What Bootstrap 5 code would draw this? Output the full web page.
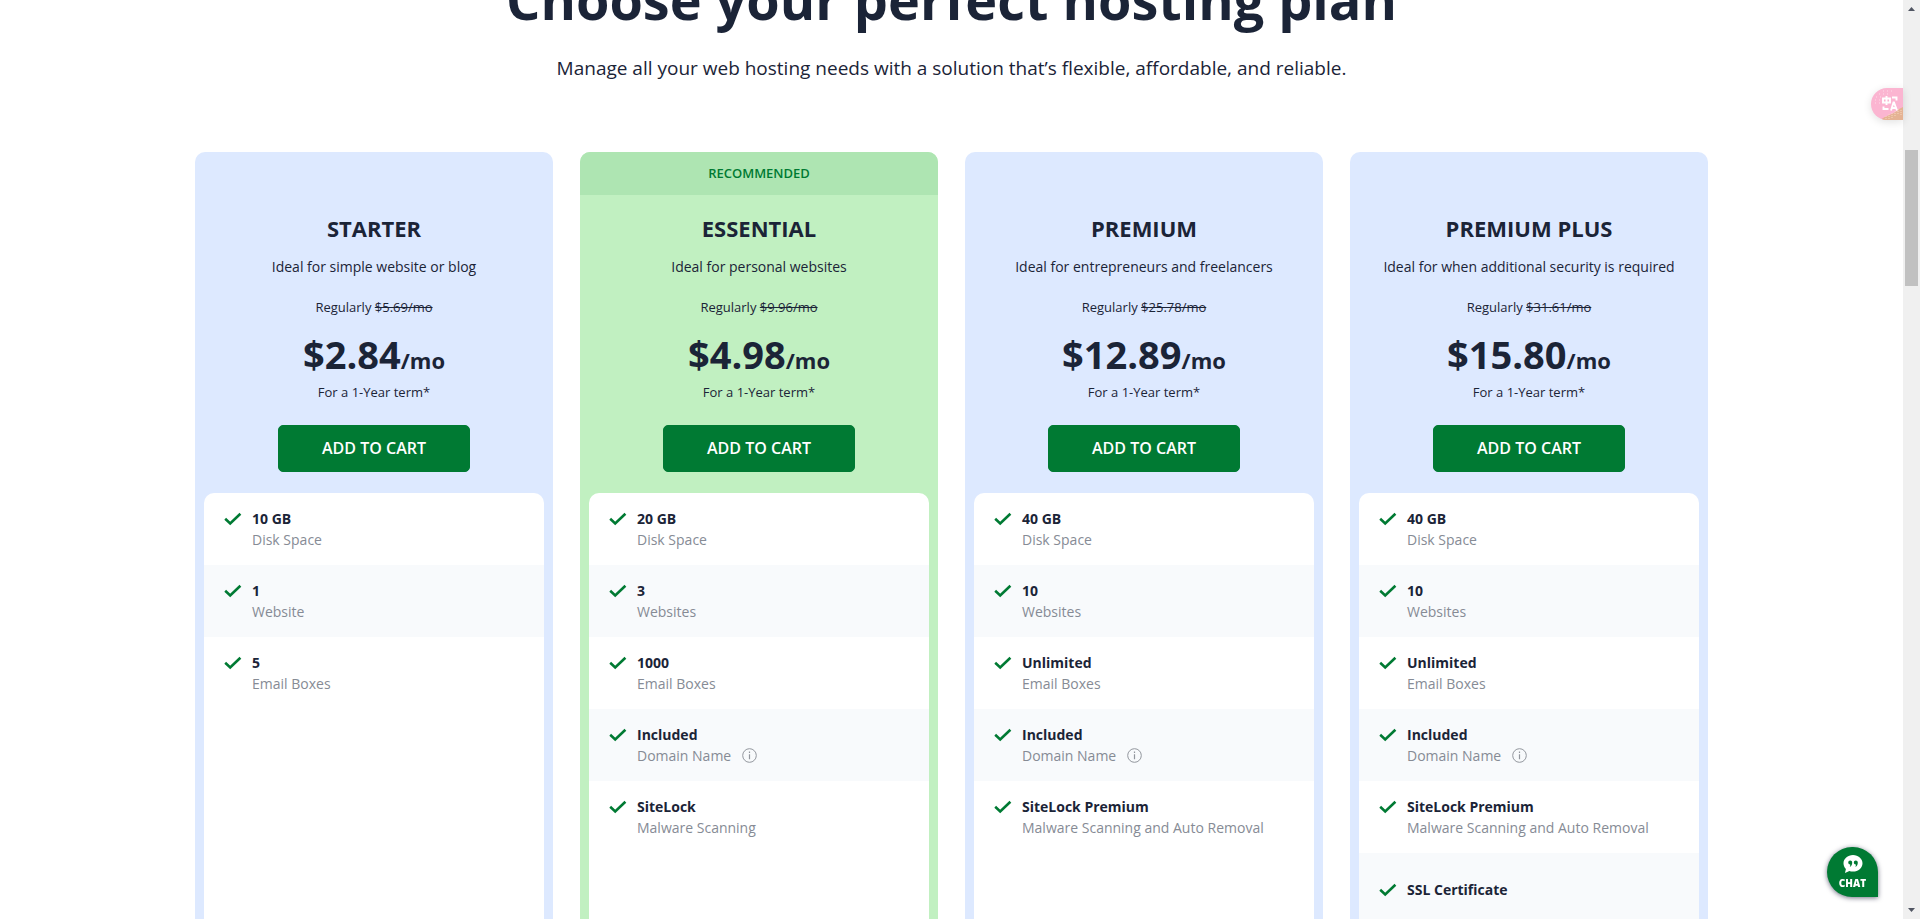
<!DOCTYPE html>
<html lang="en">
<head>
<meta charset="utf-8">
<meta name="viewport" content="width=device-width, initial-scale=1">
<title>Choose your perfect hosting plan</title>
<link href="https://cdn.jsdelivr.net/npm/bootstrap@5.3.0/dist/css/bootstrap.min.css" rel="stylesheet">
<style>
  :root { --ink: #1b2437; --muted-ink: #868b95; --brand: #007a33; }
  body { font-family: "Open Sans", "Noto Sans", sans-serif; color: var(--ink); background: #fff; }
  .page-view { min-width: 0; }
  .plans-section { margin-top: -41px; }
  .plans-title { font-size: 54px; line-height: 80px; font-weight: 700; }
  .plans-intro { font-size: 19px; line-height: 30px; margin-bottom: 69px; margin-top: 14px; }
  .plans-wrap { max-width: 1513px; }
  .plans-row { --bs-gutter-x: 27px; --bs-gutter-y: 0; }
  .plan { --plan-bg: #dde9ff; background: var(--plan-bg); border-radius: 10px 10px 0 0; min-height: 800px; }
  .plan-featured { --plan-bg: #c1f0c1; }
  .plan-flag { height: 43px; font-size: 13px; font-weight: 600; color: var(--brand); border-radius: 10px 10px 0 0; }
  .plan-featured .plan-flag { background: #aee5b2; }
  .plan-name { font-size: 22px; line-height: 30px; font-weight: 700; margin: 18px 0 14px; }
  .plan-desc { font-size: 14px; line-height: 20px; margin-bottom: 20px; }
  .plan-note { font-size: 13px; line-height: 20px; }
  .plan-price { font-size: 38px; line-height: 44px; font-weight: 700; margin-top: 15px; }
  .plan-per { font-size: 22px; }
  .btn-cart { --bs-btn-color: #fff; --bs-btn-bg: #007a33; --bs-btn-border-color: #007a33; --bs-btn-hover-color: #fff; --bs-btn-hover-bg: #00632a; --bs-btn-font-weight: 600; --bs-btn-border-radius: 5px; width: 192px; height: 47px; padding: 4px 12px 6px; margin: 23px 0 21px; }
  .feature-list { margin: 0 9px; background: #fff; border-radius: 10px 10px 0 0; font-size: 14px; line-height: 21px; }
  .feature { height: 72px; padding: 0 20px; column-gap: 10px; grid-template-columns: 18px 1fr; align-content: center; }
  .feature:nth-child(even) { background: #f8fafc; }
  .feature strong { display: block; font-weight: 700; }
  .feature span { color: var(--muted-ink); }
  .tick { width: 18px; height: 21px; }
  .info-btn { width: 15px; height: 15px; margin-left: 11px; color: #92969d; }
  .scroll-track { width: 17px; background: #f0f0f0; }
  .scroll-thumb { width: 13px; height: 136px; background: #c1c1c1; margin-top: 133px; }
  .scroll-track svg { width: 17px; height: 17px; fill: #505562; }
  .translate-tab { top: 88px; right: 17px; width: 32px; height: 32px; border-radius: 16px 0 0 16px; overflow: hidden; background: #fbb5d1; box-shadow: 0 2px 9px rgba(0,0,0,.12); }
  .chat-btn { right: 42px; bottom: 22px; width: 51px; height: 50px; border-radius: 26px 26px 0 26px; background: var(--brand); color: #fff; font-size: 10px; line-height: 12px; font-weight: 800; box-shadow: 0 1px 5px rgba(20,20,50,.6); }
</style>
</head>
<body class="vh-100 overflow-hidden d-flex">
<svg class="d-none" aria-hidden="true">
  <symbol id="tick" viewBox="0 0 18 21"><path d="M1.2 10.8 6.2 15.400 16.400 5.800" fill="none" stroke="#007a33" stroke-width="2.600"/></symbol>
  <symbol id="info" viewBox="0 0 15 15"><circle cx="7.500" cy="7.500" r="6.800" fill="none" stroke="currentColor"/><path d="M7.500 6.200v5M7.500 3.600v1.300" stroke="currentColor" stroke-width="1.200"/></symbol>
</svg>

<main class="page-view flex-grow-1 overflow-hidden">
  <section class="plans-section text-center">
    <h1 class="plans-title mb-0">Choose your perfect hosting plan</h1>
    <p class="plans-intro">Manage all your web hosting needs with a solution that’s flexible, affordable, and reliable.</p>
    <div class="plans-wrap mx-auto">
      <div class="plans-row row">

        <div class="col-12 col-sm-6 col-xl-3">
          <article class="plan h-100 d-flex flex-column">
            <div class="plan-flag"></div>
            <h2 class="plan-name">STARTER</h2>
            <p class="plan-desc">Ideal for simple website or blog</p>
            <div class="plan-note">Regularly <s>$5.69/mo</s></div>
            <div class="plan-price">$2.84<span class="plan-per">/mo</span></div>
            <div class="plan-note">For a 1-Year term*</div>
            <div><button type="button" class="btn btn-cart">ADD TO CART</button></div>
            <ul class="feature-list list-unstyled text-start flex-grow-1">
              <li class="feature d-grid"><svg class="tick"><use href="#tick"/></svg><div><strong>10 GB</strong><span>Disk Space</span></div></li>
              <li class="feature d-grid"><svg class="tick"><use href="#tick"/></svg><div><strong>1</strong><span>Website</span></div></li>
              <li class="feature d-grid"><svg class="tick"><use href="#tick"/></svg><div><strong>5</strong><span>Email Boxes</span></div></li>
            </ul>
          </article>
        </div>

        <div class="col-12 col-sm-6 col-xl-3">
          <article class="plan plan-featured h-100 d-flex flex-column">
            <div class="plan-flag d-flex align-items-center justify-content-center">RECOMMENDED</div>
            <h2 class="plan-name">ESSENTIAL</h2>
            <p class="plan-desc">Ideal for personal websites</p>
            <div class="plan-note">Regularly <s>$9.96/mo</s></div>
            <div class="plan-price">$4.98<span class="plan-per">/mo</span></div>
            <div class="plan-note">For a 1-Year term*</div>
            <div><button type="button" class="btn btn-cart">ADD TO CART</button></div>
            <ul class="feature-list list-unstyled text-start flex-grow-1">
              <li class="feature d-grid"><svg class="tick"><use href="#tick"/></svg><div><strong>20 GB</strong><span>Disk Space</span></div></li>
              <li class="feature d-grid"><svg class="tick"><use href="#tick"/></svg><div><strong>3</strong><span>Websites</span></div></li>
              <li class="feature d-grid"><svg class="tick"><use href="#tick"/></svg><div><strong>1000</strong><span>Email Boxes</span></div></li>
              <li class="feature d-grid"><svg class="tick"><use href="#tick"/></svg><div><strong>Included</strong><span class="d-flex align-items-center">Domain Name <button type="button" class="info-btn btn p-0 border-0 d-flex" aria-label="About the domain name"><svg width="15" height="15"><use href="#info"/></svg></button></span></div></li>
              <li class="feature d-grid"><svg class="tick"><use href="#tick"/></svg><div><strong>SiteLock</strong><span>Malware Scanning</span></div></li>
            </ul>
          </article>
        </div>

        <div class="col-12 col-sm-6 col-xl-3">
          <article class="plan h-100 d-flex flex-column">
            <div class="plan-flag"></div>
            <h2 class="plan-name">PREMIUM</h2>
            <p class="plan-desc">Ideal for entrepreneurs and freelancers</p>
            <div class="plan-note">Regularly <s>$25.78/mo</s></div>
            <div class="plan-price">$12.89<span class="plan-per">/mo</span></div>
            <div class="plan-note">For a 1-Year term*</div>
            <div><button type="button" class="btn btn-cart">ADD TO CART</button></div>
            <ul class="feature-list list-unstyled text-start flex-grow-1">
              <li class="feature d-grid"><svg class="tick"><use href="#tick"/></svg><div><strong>40 GB</strong><span>Disk Space</span></div></li>
              <li class="feature d-grid"><svg class="tick"><use href="#tick"/></svg><div><strong>10</strong><span>Websites</span></div></li>
              <li class="feature d-grid"><svg class="tick"><use href="#tick"/></svg><div><strong>Unlimited</strong><span>Email Boxes</span></div></li>
              <li class="feature d-grid"><svg class="tick"><use href="#tick"/></svg><div><strong>Included</strong><span class="d-flex align-items-center">Domain Name <button type="button" class="info-btn btn p-0 border-0 d-flex" aria-label="About the domain name"><svg width="15" height="15"><use href="#info"/></svg></button></span></div></li>
              <li class="feature d-grid"><svg class="tick"><use href="#tick"/></svg><div><strong>SiteLock Premium</strong><span>Malware Scanning and Auto Removal</span></div></li>
            </ul>
          </article>
        </div>

        <div class="col-12 col-sm-6 col-xl-3">
          <article class="plan h-100 d-flex flex-column">
            <div class="plan-flag"></div>
            <h2 class="plan-name">PREMIUM PLUS</h2>
            <p class="plan-desc">Ideal for when additional security is required</p>
            <div class="plan-note">Regularly <s>$31.61/mo</s></div>
            <div class="plan-price">$15.80<span class="plan-per">/mo</span></div>
            <div class="plan-note">For a 1-Year term*</div>
            <div><button type="button" class="btn btn-cart">ADD TO CART</button></div>
            <ul class="feature-list list-unstyled text-start flex-grow-1">
              <li class="feature d-grid"><svg class="tick"><use href="#tick"/></svg><div><strong>40 GB</strong><span>Disk Space</span></div></li>
              <li class="feature d-grid"><svg class="tick"><use href="#tick"/></svg><div><strong>10</strong><span>Websites</span></div></li>
              <li class="feature d-grid"><svg class="tick"><use href="#tick"/></svg><div><strong>Unlimited</strong><span>Email Boxes</span></div></li>
              <li class="feature d-grid"><svg class="tick"><use href="#tick"/></svg><div><strong>Included</strong><span class="d-flex align-items-center">Domain Name <button type="button" class="info-btn btn p-0 border-0 d-flex" aria-label="About the domain name"><svg width="15" height="15"><use href="#info"/></svg></button></span></div></li>
              <li class="feature d-grid"><svg class="tick"><use href="#tick"/></svg><div><strong>SiteLock Premium</strong><span>Malware Scanning and Auto Removal</span></div></li>
              <li class="feature d-grid"><svg class="tick"><use href="#tick"/></svg><div><strong>SSL Certificate</strong></div></li>
            </ul>
          </article>
        </div>

      </div>
    </div>
  </section>
</main>

<div class="scroll-track flex-shrink-0 d-flex flex-column align-items-center" aria-hidden="true">
  <svg viewBox="0 0 17 17"><path d="M5 11h7L8.500 7z"/></svg>
  <div class="scroll-thumb"></div>
  <svg class="mt-auto" viewBox="0 0 17 17"><path d="M5 6h7L8.500 10z"/></svg>
</div>

<button type="button" class="translate-tab position-fixed border-0 p-0" aria-label="Translate">
  <svg class="d-block" width="32" height="32" viewBox="0 0 32 32" fill="none">
    <path d="M10 32c4-5 13-5 18-11l4-2v13z" fill="#e5b394"/>
    <path d="M15 28v3M18 26v5M21 25v5M24 23v6M27 21v6M30 22v6" stroke="#f6d9c0" stroke-dasharray="1 1"/>
    <path d="M4 12h7M5 9h6M8 6h12M12 3h9M4 15h6" stroke="#fddbe8" stroke-dasharray="1 3"/>
    <path d="M12 10.500h7v4h-7zM15.500 8v9M21 9.500h4.500v3M12.500 18.500v2.500h5M20 22.500l2.500-8h.5l3 8M21 20h4.500" stroke="#fff" stroke-width="1.900"/>
  </svg>
</button>

<button type="button" class="chat-btn position-fixed border-0 p-0 d-flex flex-column align-items-center">
  <svg class="mt-2" width="20" height="18" viewBox="0 0 20 18" aria-hidden="true">
    <path d="M10 0c5.300 0 9.500 3.700 9.500 8.300s-4.200 8.300-9.500 8.300c-1.300 0-2.600-.2-3.700-.6L2 18l.9-4C1.300 12.500.5 10.500.5 8.300.5 3.700 4.700 0 10 0z" fill="#fff"/>
    <path d="M5.200 7.500a2 2 0 1 1 4 0c0 2-.8 3.500-2.400 4.500.4-1 .5-1.700.4-2.500a2 2 0 0 1-2-2zM10.800 7.500a2 2 0 1 1 4 0c0 2-.8 3.500-2.400 4.500.4-1 .5-1.700.4-2.500a2 2 0 0 1-2-2z" fill="#007a33"/>
  </svg>
  <span class="mt-1">CHAT</span>
</button>

<script src="https://cdn.jsdelivr.net/npm/bootstrap@5.3.0/dist/js/bootstrap.bundle.min.js"></script>
</body>
</html>
